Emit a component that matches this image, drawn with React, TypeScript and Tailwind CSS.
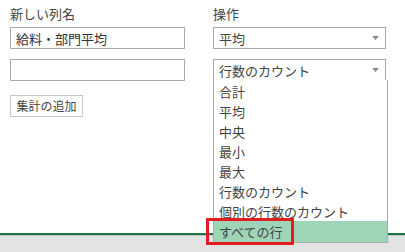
import React from 'react';

const font = { fontFamily: '"Noto Sans CJK JP", "Noto Sans", sans-serif' };

const options = ['合計', '平均', '中央', '最小', '最大', '行数のカウント', '個別の行数のカウント', 'すべての行'];

function Arrow() {
  return (
    <svg width="7" height="4" viewBox="0 0 7 4" className="shrink-0">
      <path d="M0 0h7L3.5 4z" fill="#8a8a8a" />
    </svg>
  );
}

function Select({ value }: { value: string }) {
  return (
    <div className="h-[22px] border border-[#ababab] bg-white flex items-center justify-between pl-[5px] pr-[6px]">
      <span className="text-[13px] leading-none text-[#444]">{value}</span>
      <Arrow />
    </div>
  );
}

export default function App() {
  return (
    <div className="w-[405px] h-[252px] bg-white flex flex-col overflow-hidden" style={font}>
      <div className="relative h-[233px] flex pt-[6px]">
        {/* left column */}
        <div className="w-[175px] ml-[10px] flex flex-col">
          <div className="text-[13px] leading-[16px] text-[#444] h-[21px]">新しい列名</div>
          <div className="h-[22px] border border-[#ababab] flex items-center pl-[5px] text-[13px] leading-none text-[#333]">
            給料・部門平均
          </div>
          <div className="h-[22px] border border-[#ababab] mt-[10px]" />
          <button className="mt-[14px] w-[73px] h-[22px] border border-[#c6c6c6] bg-white text-[12px] leading-none text-[#444] flex items-center justify-center">
            集計の追加
          </button>
        </div>

        {/* right column */}
        <div className="w-[173px] ml-[28px] flex flex-col">
          <div className="text-[13px] leading-[16px] text-[#444] h-[21px]">操作</div>
          <Select value="平均" />
          <div className="mt-[10px] relative">
            <Select value="行数のカウント" />
            <div className="absolute left-0 top-[21px] w-[175px] border-x border-b border-[#ababab] bg-white z-10 pt-[1px]">
              {options.map((o, i) => (
                <div
                  key={o}
                  className={
                    i === options.length - 1
                      ? 'relative h-[21px] flex items-center pl-[5px] text-[13px] leading-none text-[#444] bg-[#9fd5b7]'
                      : 'h-[20px] flex items-center pl-[5px] text-[13px] leading-none text-[#444]'
                  }
                >
                  {o}
                  {i === options.length - 1 && (
                    <div className="absolute left-[-8px] top-[-3px] w-[88px] h-[27px] border-[3px] border-[#e31b23]" />
                  )}
                </div>
              ))}
            </div>
          </div>
        </div>
      </div>
      <div className="h-[2px] bg-[#217346]" />
      <div className="h-[1px] bg-[#c4c4c4]" />
      <div className="flex-1 bg-[#e3e3e3]" />
    </div>
  );
}
